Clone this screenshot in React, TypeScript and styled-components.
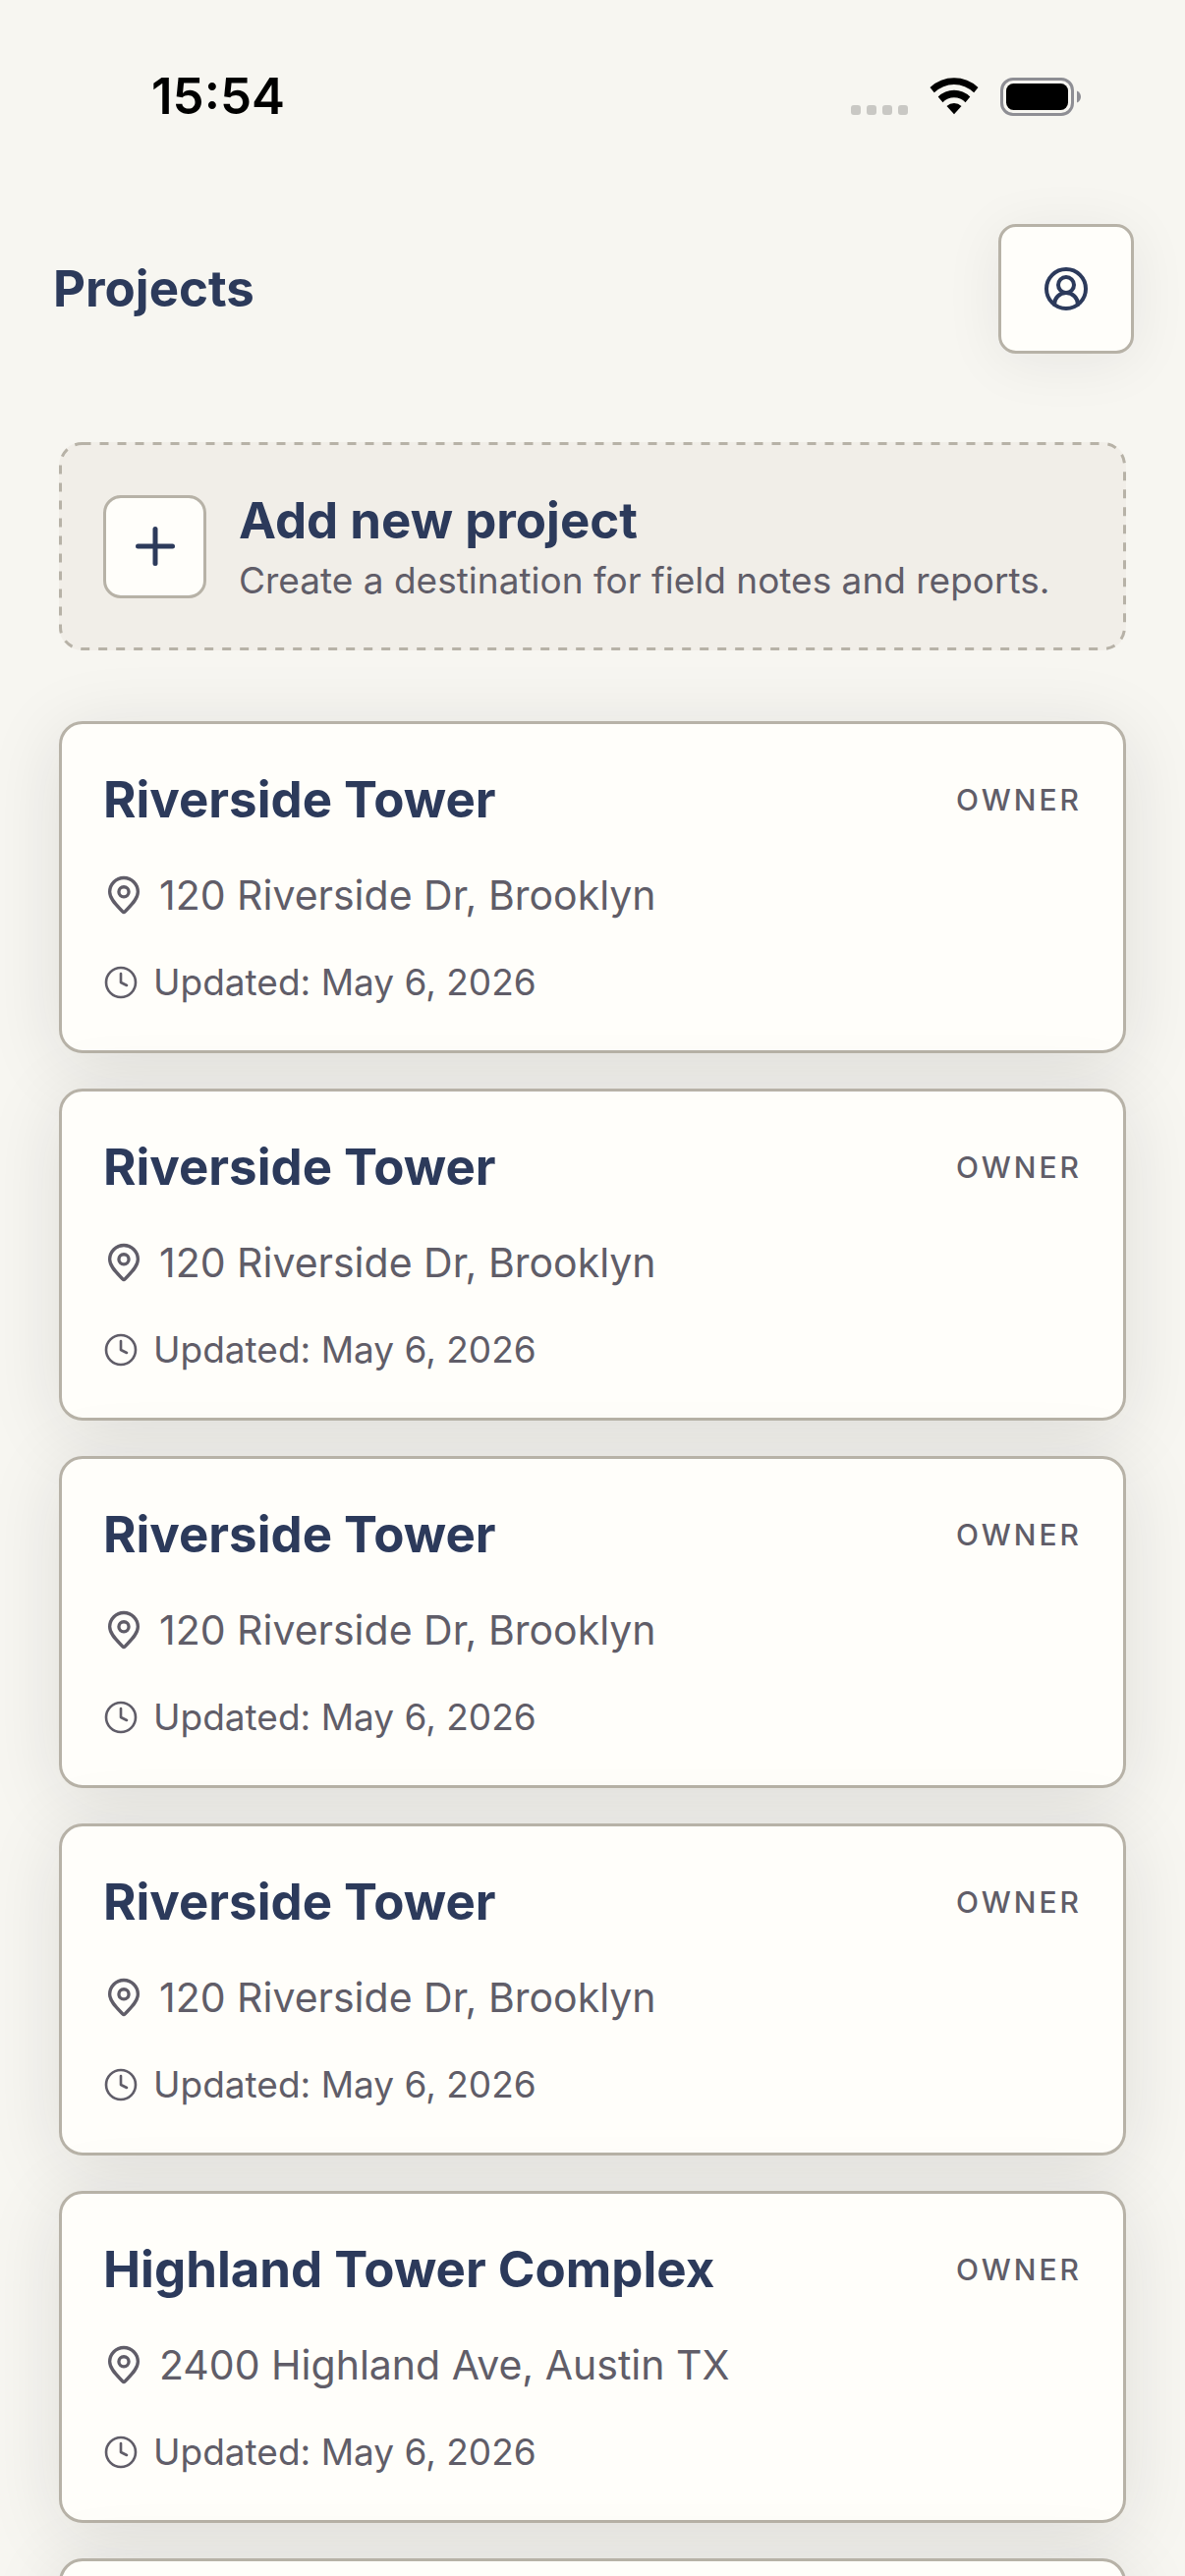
import React from "react";
import styled, { createGlobalStyle } from "styled-components";
import { CircleUserRound, Clock, Plus } from "lucide-react";

const color = {
  page: "#f7f6f1",
  surface: "#fffefa",
  muted: "#f1eee8",
  line: "#b7b2a7",
  ink: "#2c3a5b",
  text: "#605d68",
};

const GlobalStyle = createGlobalStyle`
  *, *::before, *::after { box-sizing: border-box; }
  body {
    margin: 0;
    background: ${color.page};
    color: ${color.text};
    font-family: Inter, "Liberation Sans", sans-serif;
  }
  h1, h2, p, ul { margin: 0; padding: 0; }
  button { font: inherit; color: inherit; cursor: pointer; }
`;

const Screen = styled.div`
  height: 100vh;
  overflow: hidden;
  display: flex;
  flex-direction: column;
`;

const StatusBar = styled.div`
  flex: none;
  display: flex;
  align-items: center;
  justify-content: space-between;
  height: 186px;
  padding: 10px 106px 0 154px;
`;

const Time = styled.time`
  line-height: 60px;
  color: #000;
  font-size: 51px;
  font-weight: 600;
`;

const StatusIcons = styled.div`
  display: flex;
  align-items: center;
  gap: 22px;
`;

const SignalDots = styled.div`
  display: flex;
  align-self: flex-end;
  gap: 6px;
  padding-bottom: 1px;
`;

const Dot = styled.span`
  width: 10px;
  height: 10px;
  border-radius: 3px;
  background: #c9c8c4;
`;

const Header = styled.header`
  flex: none;
  display: flex;
  align-items: center;
  justify-content: space-between;
  padding: 42px 52px 0 54px;
`;

const PageTitle = styled.h1`
  color: ${color.ink};
  font-size: 51px;
  line-height: 66px;
  font-weight: 700;
`;

const ProfileButton = styled.button`
  display: grid;
  place-items: center;
  width: 138px;
  height: 132px;
  padding: 0;
  color: ${color.ink};
  background: ${color.surface};
  border: 3px solid ${color.line};
  border-radius: 18px;
  box-shadow: 0 8px 60px rgba(30, 26, 40, 0.07);
`;

const Content = styled.main`
  display: flex;
  flex-direction: column;
  gap: 72px;
  padding: 90px 60px 0;
`;

const AddButton = styled.button`
  position: relative;
  flex: none;
  display: flex;
  align-items: center;
  gap: 33px;
  height: 212px;
  padding: 0 45px;
  text-align: left;
  background: ${color.muted};
  border: 0;
  border-radius: 24px;
`;

const DashedOutline = styled.svg`
  position: absolute;
  inset: 0;
  width: 100%;
  height: 100%;
  overflow: visible;
  pointer-events: none;
`;

const DashedRect = styled.rect`
  x: 1.5px;
  y: 1.5px;
  width: calc(100% - 3px);
  height: calc(100% - 3px);
  rx: 22px;
  fill: none;
  stroke: ${color.line};
  stroke-width: 3px;
  stroke-dasharray: 9 9;
`;

const PlusTile = styled.span`
  flex: none;
  display: grid;
  place-items: center;
  width: 105px;
  height: 105px;
  color: ${color.ink};
  background: ${color.surface};
  border: 3px solid ${color.line};
  border-radius: 18px;
`;

const AddText = styled.span`
  display: flex;
  flex-direction: column;
  gap: 1px;
  padding-top: 3px;
`;

const AddTitle = styled.span`
  color: ${color.ink};
  font-size: 51px;
  line-height: 66px;
  font-weight: 700;
`;

const AddHint = styled.span`
  font-size: 37px;
  line-height: 54px;
`;

const ProjectList = styled.ul`
  display: flex;
  flex-direction: column;
  gap: 36px;
  list-style: none;
`;

const ProjectCard = styled.li`
  flex: none;
  display: flex;
  flex-direction: column;
  height: 338px;
  padding: 42px;
  background: ${color.surface};
  border: 3px solid ${color.line};
  border-radius: 24px;
  box-shadow: 0 12px 78px rgba(30, 26, 40, 0.11);
`;

const CardTop = styled.div`
  display: flex;
  align-items: center;
  justify-content: space-between;
`;

const CardTitle = styled.h2`
  color: ${color.ink};
  font-size: 51px;
  line-height: 70px;
  font-weight: 700;
`;

const Role = styled.span`
  font-size: 30px;
  line-height: 42px;
  font-weight: 500;
  letter-spacing: 3px;
`;

const Address = styled.p`
  display: flex;
  align-items: center;
  gap: 15px;
  padding-top: 32px;
  font-size: 41px;
  line-height: 60px;
`;

const Updated = styled.p`
  display: flex;
  align-items: center;
  gap: 15px;
  padding-top: 32px;
  font-size: 37px;
  line-height: 54px;
`;

type Project = { id: number; name: string; address: string; updated: string };

const riverside = {
  name: "Riverside Tower",
  address: "120 Riverside Dr, Brooklyn",
  updated: "May 6, 2026",
};

const highland = {
  name: "Highland Tower Complex",
  address: "2400 Highland Ave, Austin TX",
  updated: "May 6, 2026",
};

const projects: Project[] = [
  riverside,
  riverside,
  riverside,
  riverside,
  highland,
].map((p, id) => ({ id, ...p }));

function WifiIcon() {
  return (
    <svg width="50" height="38" viewBox="0 0 50 38" aria-hidden="true">
      <path d="M0.5 9.9A36 36 0 0 1 49.5 9.9L45.2 15.2A29 29 0 0 0 4.8 15.2Z" />
      <path d="M8.7 19.5A23.2 23.2 0 0 1 41.3 19.5L36.5 25.2A15.8 15.8 0 0 0 13.5 25.2Z" />
      <path d="M17.5 29A10.8 10.8 0 0 1 32.5 29L25 37.3Z" />
    </svg>
  );
}

function BatteryIcon() {
  return (
    <svg width="82" height="39" viewBox="0 0 82 39" aria-hidden="true">
      <rect x="1.5" y="1.5" width="72" height="36" rx="11.5" fill="none" stroke="#8e8e94" strokeWidth="3" />
      <rect x="6" y="6" width="63" height="27" rx="7.5" />
      <path d="M78 13.5C80.8 14.6 82 17 82 19.5S80.8 24.4 78 25.5Z" fill="#8e8e94" />
    </svg>
  );
}

function PinIcon() {
  return (
    <svg
      width="42"
      height="42"
      viewBox="0 0 24 24"
      fill="none"
      stroke="currentColor"
      strokeWidth="1.9"
      strokeLinecap="round"
      strokeLinejoin="round"
      aria-hidden="true"
    >
      <path d="M20.2 10.2c0 4.3-4.3 8-7.5 11.4a1 1 0 0 1-1.4 0C8.1 18.2 3.8 14.5 3.8 10.2a8.2 8.2 0 0 1 16.4 0Z" />
      <circle cx="12" cy="10.2" r="2.9" />
    </svg>
  );
}

export default function App() {
  return (
    <>
      <GlobalStyle />
      <Screen>
        <StatusBar>
          <Time>15:54</Time>
          <StatusIcons>
            <SignalDots>
              <Dot />
              <Dot />
              <Dot />
              <Dot />
            </SignalDots>
            <WifiIcon />
            <BatteryIcon />
          </StatusIcons>
        </StatusBar>
        <Header>
          <PageTitle>Projects</PageTitle>
          <ProfileButton type="button" aria-label="Profile">
            <CircleUserRound size={48} />
          </ProfileButton>
        </Header>
        <Content>
          <AddButton type="button">
            <DashedOutline aria-hidden="true">
              <DashedRect />
            </DashedOutline>
            <PlusTile>
              <Plus size={60} />
            </PlusTile>
            <AddText>
              <AddTitle>Add new project</AddTitle>
              <AddHint>Create a destination for field notes and reports.</AddHint>
            </AddText>
          </AddButton>
          <ProjectList>
            {projects.map((project) => (
              <ProjectCard key={project.id}>
                <CardTop>
                  <CardTitle>{project.name}</CardTitle>
                  <Role>OWNER</Role>
                </CardTop>
                <Address>
                  <PinIcon />
                  {project.address}
                </Address>
                <Updated>
                  <Clock size={36} strokeWidth={1.75} />
                  Updated: {project.updated}
                </Updated>
              </ProjectCard>
            ))}
            <ProjectCard aria-hidden="true" />
          </ProjectList>
        </Content>
      </Screen>
    </>
  );
}
